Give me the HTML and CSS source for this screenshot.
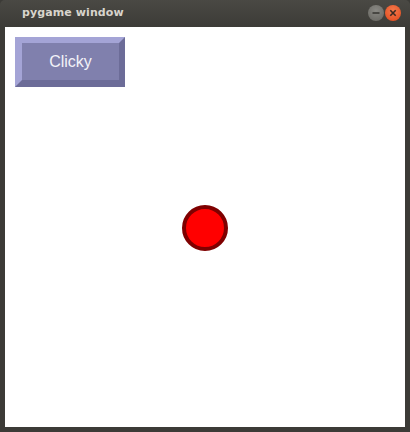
FILE: index.html
```html
<!DOCTYPE html>
<html>
<head>
<meta charset="utf-8">
<link rel="stylesheet" href="styles.css">
</head>
<body>
<div class="window">
  <div class="titlebar">
    <span class="title">pygame window</span>
    <div class="controls">
      <span class="ctl min"><svg width="16" height="16" viewBox="0 0 16 16"><line x1="4.5" y1="8" x2="11.5" y2="8" stroke="#3a3935" stroke-width="1.6"/></svg></span>
      <span class="ctl close"><svg width="16" height="16" viewBox="0 0 16 16"><path d="M5.3 5.3 L10.7 10.7 M10.7 5.3 L5.3 10.7" stroke="#3a2a22" stroke-width="1.6"/></svg></span>
    </div>
  </div>
  <div class="canvas">
    <div class="btn"><span class="btn-label">Clicky</span></div>
    <div class="ball"></div>
  </div>
</div>
</body>
</html>
```
FILE: styles.css
```css
html, body {
  margin: 0;
  padding: 0;
  background: #3c3b37;
}
.window {
  width: 410px;
  height: 432px;
  display: flex;
  flex-direction: column;
  background: #3c3b37;
}
.titlebar {
  height: 27px;
  display: flex;
  align-items: center;
  justify-content: space-between;
  padding: 0 9px 0 22px;
  background: linear-gradient(#4a4944, #3c3b37);
  border-radius: 5px 5px 0 0;
  box-sizing: border-box;
}
.title {
  font-family: "DejaVu Sans", sans-serif;
  font-weight: bold;
  font-size: 11px;
  color: #d8d4cc;
  letter-spacing: 0.1px;
  margin-top: -2px;
}
.controls {
  display: flex;
  gap: 1px;
  margin-top: -2px;
}
.ctl {
  width: 16px;
  height: 16px;
  border-radius: 50%;
  display: flex;
}
.min {
  background: radial-gradient(circle at 50% 35%, #8a8984, #65645f);
}
.close {
  background: radial-gradient(circle at 50% 35%, #f57a4c, #e0471a);
}
.canvas {
  position: relative;
  width: 400px;
  height: 400px;
  margin-left: 5px;
  background: #ffffff;
}
.btn {
  position: absolute;
  left: 10px;
  top: 10px;
  width: 97px;
  height: 37px;
  background: #8080ad;
  border-left: 7px solid #a4a4d6;
  border-top: 6px solid #a4a4d6;
  border-right: 6px solid #6c6c98;
  border-bottom: 7px solid #6c6c98;
  display: flex;
  align-items: center;
  justify-content: center;
}
.btn-label {
  font-family: "Liberation Sans", Arial, sans-serif;
  font-size: 16px;
  color: #f2f2f8;
  margin-top: 1px;
}
.ball {
  position: absolute;
  left: 177px;
  top: 178px;
  width: 38px;
  height: 38px;
  border-radius: 50%;
  background: #ff0000;
  border: 4px solid #7f0000;
}
```
